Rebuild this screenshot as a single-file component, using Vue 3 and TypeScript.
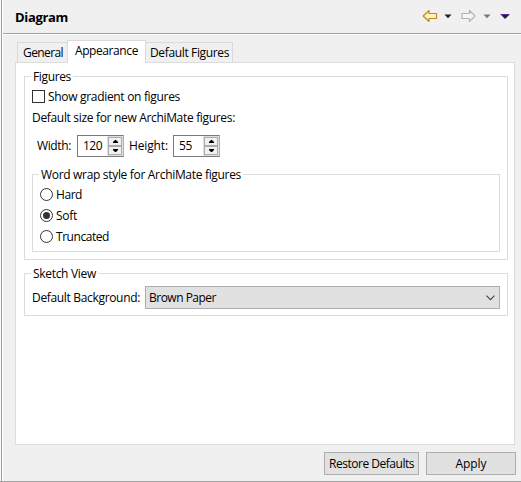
<script setup lang="ts">
import { ref, type Directive } from 'vue'

const wrapStyles = [
  { name: 'Hard', width: 26 },
  { name: 'Soft', width: 21 },
  { name: 'Truncated', width: 53 },
]
const wrap = ref('Soft')
const gradient = ref(false)
const tabs = [
  { name: 'General', width: 40 },
  { name: 'Appearance', width: 63 },
  { name: 'Default Figures', width: 79 },
]
const activeTab = ref('Appearance')
const sizes = ref([
  { name: 'Width:', width: 34, value: 120, valueWidth: 19 },
  { name: 'Height:', width: 39, value: 55, valueWidth: 13 },
])

// Tracks a label so that it takes the given advance width.
const vFit: Directive<HTMLElement, number> = {
  mounted(el, binding) {
    const natural = el.getBoundingClientRect().width
    const count = (el.textContent ?? '').length
    el.style.letterSpacing = `${(binding.value - natural) / count}px`
  },
}
</script>

<template>
  <div class="page">
    <header class="header">
      <h1><span v-fit="53">Diagram</span></h1>
      <div class="nav">
        <svg class="arrow" width="16" height="14" viewBox="0 0 16 14">
          <path d="M1.200 7 7 1.500V4.500H14.500V9.500H7V12.500Z" fill="#fff3bf" stroke="#c18a24" stroke-width="1.200" stroke-linejoin="round" />
        </svg>
        <svg class="caret back" width="8" height="5" viewBox="0 0 8 5"><path d="M.5 .5H7.500L4 4.300Z" fill="#202020" /></svg>
        <svg class="arrow" width="16" height="14" viewBox="0 0 16 14">
          <path d="M14 7 8.500 1.500V4.500H1V9.500H8.500V12.500Z" fill="#f5f5f5" stroke="#b4b4b4" stroke-width="1.200" stroke-linejoin="round" />
        </svg>
        <svg class="caret fwd" width="8" height="5" viewBox="0 0 8 5"><path d="M.5 .5H7.500L4 4.300Z" fill="#77777b" /></svg>
        <svg class="caret" width="10" height="5" viewBox="0 0 10 5"><path d="M0 0H10L5 5Z" fill="#5a2ca0" /><path d="M2 1H9L5 4.500Z" fill="#252028" /></svg>
      </div>
    </header>

    <nav class="tabs">
      <button v-for="t in tabs" :key="t.name" class="tab" :class="{ active: t.name === activeTab }" @click="activeTab = t.name">
        <span v-fit="t.width">{{ t.name }}</span>
      </button>
    </nav>

    <main class="panel">
      <section class="group figures">
        <h2 class="legend"><span v-fit="38">Figures</span></h2>
        <div class="check" @click="gradient = !gradient">
          <span class="box" :class="{ on: gradient }"></span><span v-fit="132">Show gradient on figures</span>
        </div>
        <div class="sizeTitle"><span v-fit="203">Default size for new ArchiMate figures:</span></div>
        <div class="sizes">
          <template v-for="s in sizes" :key="s.name">
            <div class="sizeLabel"><span v-fit="s.width">{{ s.name }}</span></div>
            <div class="spinner">
              <div class="value"><span v-fit="s.valueWidth">{{ s.value }}</span></div>
              <div class="steps">
                <button @click="s.value++"><svg width="5" height="3" viewBox="0 0 5 3"><path d="M0 3V2L2 0H3L5 2V3Z" /></svg></button>
                <button @click="s.value--"><svg width="5" height="3" viewBox="0 0 5 3"><path d="M0 0V1L2 3H3L5 1V0Z" /></svg></button>
              </div>
            </div>
          </template>
        </div>
        <section class="group wrapping">
          <h2 class="legend"><span v-fit="200">Word wrap style for ArchiMate figures</span></h2>
          <div v-for="w in wrapStyles" :key="w.name" class="option" @click="wrap = w.name">
            <svg width="13" height="13" viewBox="0 0 13 13">
              <circle cx="6.500" cy="6.500" r="6" fill="#fff" stroke="#333" />
              <circle v-if="wrap === w.name" cx="6.500" cy="6.500" r="3.500" fill="#333" />
            </svg>
            <span v-fit="w.width">{{ w.name }}</span>
          </div>
        </section>
      </section>

      <section class="group sketch">
        <h2 class="legend"><span v-fit="63">Sketch View</span></h2>
        <div class="background">
          <div class="backgroundLabel"><span v-fit="108">Default Background:</span></div>
          <button class="select">
            <span v-fit="67">Brown Paper</span>
            <svg width="9" height="6" viewBox="0 0 9 6"><path d="M.5 .7 4.500 4.700 8.500 .7" fill="none" stroke="#444" stroke-width="1.100" /></svg>
          </button>
        </div>
      </section>
    </main>

    <footer class="actions">
      <button class="restore"><span v-fit="85">Restore Defaults</span></button>
      <button class="apply"><span v-fit="31">Apply</span></button>
    </footer>
  </div>
</template>

<style>
body { margin: 0; background: #f0f0f0; overflow: hidden; }
</style>

<style scoped>
.page {
  box-sizing: border-box;
  width: 521px;
  height: 482px;
  padding-left: 3px;
  background: linear-gradient(to right, #f8f8f8 1px, #a0a0a0 1px 2px, #fff 2px 3px, #f0f0f0 3px);
  border-bottom: 1px solid #a0a0a0;
  color: #000;
  font: 12px/16px "Open Sans", "Noto Sans", sans-serif;
  white-space: nowrap;
}
.page *, .page *::before { box-sizing: border-box; }
button { margin: 0; padding: 0; border: 0; font: inherit; color: inherit; }
h1, h2 { margin: 0; font: inherit; }
span { display: inline-block; }
svg { display: block; flex: none; }
.header {
  display: flex;
  justify-content: space-between;
  height: 35px;
  padding: 9px 11px 0 12px;
  border-bottom: 1px solid #fff;
  box-shadow: inset 0 -1px #a0a0a0;
}
.header h1 { font-size: 13px; font-weight: 700; }
.nav { display: flex; align-items: center; height: 14px; }
.caret.back { margin: 0 9px 0 6px; }
.caret.fwd { margin: 0 9px 0 6px; }
.tabs { display: flex; align-items: flex-end; height: 27px; padding-left: 14px; }
.tab {
  height: 20px;
  padding: 0 4px 0 5px;
  border: 1px solid #d9d9d9;
  border-bottom: 0;
  background: #f0f0f0;
  text-align: left;
}
.tab:first-child { width: 50px; border-right: 0; }
.tab:last-child { width: 87px; padding-left: 4px; border-left: 0; }
.tab.active {
  position: relative;
  width: 79px;
  height: 23px;
  margin-bottom: -1px;
  padding: 0 0 2px 7px;
  background: #fff;
}
.panel {
  width: 500px;
  height: 383px;
  margin-left: 12px;
  padding: 13px 6px 0 8px;
  border: 1px solid #dcdcdc;
  background: #fff;
}
.group { border: 1px solid #dcdcdc; }
.legend {
  width: max-content;
  height: 16px;
  margin: -8px 0 0 6px;
  padding: 0 2px;
  background: #fff;
}
.figures { height: 184px; padding: 0 7px; }
.figures > .legend { margin-left: -1px; }
.check { display: flex; gap: 3px; height: 21px; padding-top: 4px; align-items: flex-start; }
.box { width: 13px; height: 13px; margin-top: 1px; border: 1px solid #333; }
.box.on { background: #333; box-shadow: inset 0 0 0 2px #fff; }
.sizeTitle { height: 21px; padding-top: 4px; }
.sizes { display: flex; height: 30px; padding: 8px 0 0 5px; }
.sizeLabel { width: 40px; padding-top: 3px; }
.spinner + .sizeLabel { width: 44px; margin-left: 5px; }
.spinner {
  display: flex;
  width: 47px;
  height: 22px;
  border: 1px solid #7a7a7a;
  border-right-color: #b0b0b0;
}
.value { width: 29px; padding: 2px 0 0 5px; }
.steps { display: flex; flex-direction: column; gap: 0; width: 16px; height: 20px; padding: 1px; background: #dedede; }
.steps button { display: grid; place-items: center; height: 9px; background: #f0f0f0; border: 1px solid #adadad; }
.wrapping { height: 78px; margin-top: 17px; }
.option { display: flex; gap: 3px; height: 21px; padding-left: 7px; align-items: flex-start; }
.option svg { margin-top: 5px; }
.option span { padding-top: 4px; }
.sketch { height: 43px; margin-top: 13px; padding: 0 7px; }
.sketch > .legend { margin-left: -1px; }
.background { display: flex; padding-top: 4px; }
.backgroundLabel { width: 113px; padding-top: 4px; }
.select {
  display: flex;
  align-items: center;
  justify-content: space-between;
  width: 355px;
  height: 23px;
  padding: 0 4px 0 3px;
  border: 1px solid #adadad;
  background: #e1e1e1;
}
.actions { display: flex; justify-content: flex-end; gap: 7px; padding: 7px 5px 0 0; }
.actions button { height: 23px; border: 1px solid #adadad; background: #e1e1e1; }
.restore { width: 95px; }
.apply { width: 90px; }
</style>
